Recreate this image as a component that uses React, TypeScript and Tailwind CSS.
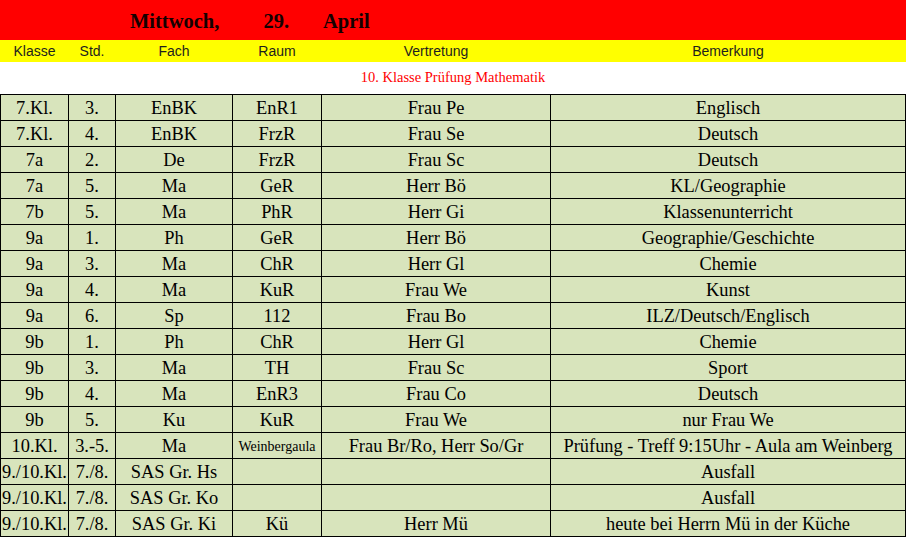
const rows: string[][] = [
  ["7.Kl.", "3.", "EnBK", "EnR1", "Frau Pe", "Englisch"],
  ["7.Kl.", "4.", "EnBK", "FrzR", "Frau Se", "Deutsch"],
  ["7a", "2.", "De", "FrzR", "Frau Sc", "Deutsch"],
  ["7a", "5.", "Ma", "GeR", "Herr Bö", "KL/Geographie"],
  ["7b", "5.", "Ma", "PhR", "Herr Gi", "Klassenunterricht"],
  ["9a", "1.", "Ph", "GeR", "Herr Bö", "Geographie/Geschichte"],
  ["9a", "3.", "Ma", "ChR", "Herr Gl", "Chemie"],
  ["9a", "4.", "Ma", "KuR", "Frau We", "Kunst"],
  ["9a", "6.", "Sp", "112", "Frau Bo", "ILZ/Deutsch/Englisch"],
  ["9b", "1.", "Ph", "ChR", "Herr Gl", "Chemie"],
  ["9b", "3.", "Ma", "TH", "Frau Sc", "Sport"],
  ["9b", "4.", "Ma", "EnR3", "Frau Co", "Deutsch"],
  ["9b", "5.", "Ku", "KuR", "Frau We", "nur Frau We"],
  ["10.Kl.", "3.-5.", "Ma", "Weinbergaula", "Frau Br/Ro, Herr So/Gr", "Prüfung - Treff 9:15Uhr - Aula am Weinberg"],
  ["9./10.Kl.", "7./8.", "SAS Gr. Hs", "", "", "Ausfall"],
  ["9./10.Kl.", "7./8.", "SAS Gr. Ko", "", "", "Ausfall"],
  ["9./10.Kl.", "7./8.", "SAS Gr. Ki", "Kü", "Herr Mü", "heute bei Herrn Mü in der Küche"],
];

const heads = ["Klasse", "Std.", "Fach", "Raum", "Vertretung", "Bemerkung"];

export default function App() {
  return (
    <div className="w-[906px] h-[537px] bg-white overflow-hidden font-['Liberation_Serif',serif]">
      {/* Titelzeile */}
      <div className="h-[40px] bg-[#ff0000] flex items-center pt-[2px] text-[20.5px] font-bold text-[#140000] leading-[38px]">
        <span className="ml-[130px]">Mittwoch,</span>
        <span className="ml-[44px]">29.</span>
        <span className="ml-[34px]">April</span>
      </div>

      {/* Spaltenköpfe */}
      <div className="h-[22px] bg-[#ffff00] grid grid-cols-[67px_46px_116px_88px_228px_354px] gap-x-px px-px font-['Liberation_Sans',sans-serif] text-[14px] text-[#1e1e1e]">
        {heads.map((h) => (
          <div key={h} className="flex items-center justify-center pt-px">
            {h}
          </div>
        ))}
      </div>

      <div className="h-[32px] flex items-center justify-center text-[14.5px] text-[#ff0000] pb-[1px]">
        10. Klasse Prüfung Mathematik
      </div>

      {/* Tabelle */}
      <div className="grid grid-cols-[67px_46px_116px_88px_228px_354px] gap-px p-px bg-black text-black">
        {rows.map((r, i) =>
          r.map((c, j) => (
            <div
              key={i + "-" + j}
              className={`h-[25px] bg-[#d8e4bc] flex items-center justify-center whitespace-nowrap pt-[2px] ${
                c === "Weinbergaula" ? "text-[14px]" : "text-[18.4px]"
              }`}
            >
              {c}
            </div>
          ))
        )}
      </div>
    </div>
  );
}
